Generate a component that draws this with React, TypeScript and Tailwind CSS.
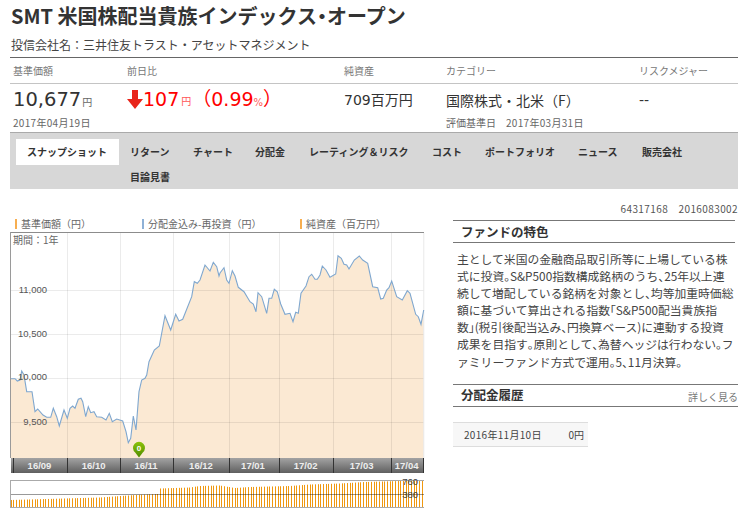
const pts: [number, number][] = [[11,378.7],[15,378.7],[17.3,381],[20,380],[21.7,371],[24,375],[26.7,391.7],[32,391.7],[35,411.7],[37.7,409],[43,415],[46.7,417.3],[50.7,417.3],[53.3,408.3],[56.7,416.7],[59.3,426],[64,410],[67.3,418.3],[70,408.3],[72.7,406],[75,408.3],[78.3,399.3],[81,398.3],[82.7,401.7],[85.7,416.7],[88.3,406.7],[90.7,412.7],[94,411.7],[96.7,416.7],[101.7,417.3],[106,420],[109.3,413.3],[112.3,421.7],[116.7,419],[122.7,421],[126,431.7],[128.3,442.7],[130.7,438.3],[133.3,416],[136,430],[139,391.7],[141.7,380],[145,378.3],[146.7,375],[149,361.7],[154.3,350],[159.3,346],[165,315.7],[170.7,330],[175.7,314.3],[179,321],[182.7,319.3],[191.7,296.7],[194.3,281.7],[197.3,283.3],[200,280],[205,265],[210,271],[213.3,262.3],[216.7,266.7],[219,276],[220,273],[224,267.7],[226.7,280],[229,283.3],[232.3,270.7],[235,276],[238.3,287.3],[244,291.7],[250,301.7],[253.3,304],[256,311.7],[258,292.7],[261.7,296.7],[266.7,313.3],[269,298.3],[271.7,298.3],[274.3,289.3],[277.3,291.7],[280.7,304],[285,314.3],[290,313.3],[293,321.7],[295.7,312.3],[298.3,313.3],[301,293.3],[306,286],[309,276.7],[311.7,274.3],[315,279.3],[317.3,279.3],[320,275],[322.3,266],[326,270],[330,277.3],[335.7,274],[338,255.7],[341.3,258.3],[344,264.3],[346.7,265],[349,269],[354.3,260],[359.3,256],[362.7,260],[367.7,263.3],[372.7,286.7],[377.7,287.7],[380.7,299],[383.3,298.3],[386.7,290],[389,287.7],[391.7,281],[396.7,296.7],[402.3,300],[407.3,290.7],[410,293.3],[415.7,314.3],[418.3,316.7],[421,324.3],[423.7,310]];
const line = pts.map((p) => p.join(",")).join(" ");
const area = `11,458 ${line} 423.7,458`;
const vx = [67.5, 120.5, 173.5, 229.5, 279.5, 333.5, 391.5];
const hy = [290.5, 334.5, 378.5, 422.5];
const ticks = [13.5, 67.5, 120.5, 173.5, 229.5, 279.5, 333.5, 391.5, 423.5];
const months: [string, number][] = [["16/09",39.5],["16/10",93.7],["16/11",146],["16/12",201],["17/01",253],["17/02",305.7],["17/03",361.7],["17/04",406.7]];
const yl: [string, number][] = [["11,000",289.5],["10,500",333],["10,000",376.5],["9,500",421.5]];
const vol: [number, number][] = [[11,500],[100,497.5],[135,495],[158,494],[160,488.5],[190,487.5],[200,486],[220,485.5],[235,488],[250,487],[290,486],[310,484.5],[340,483.5],[365,482],[400,481],[424,481]];
const volTop = (x: number) => {
  for (let i = 1; i < vol.length; i++) {
    if (x <= vol[i][0]) {
      const [a, b] = vol[i - 1];
      const [c, d] = vol[i];
      return b + ((d - b) * (x - a)) / (c - a);
    }
  }
  return 481;
};
const bars = Array.from({ length: 155 }, (_, i) => Math.floor(11 + i * 2.67) + 0.5);

const Chart = () => (
  <svg viewBox="10 232 415 278" width={415} height={278} className="block" style={{ fontFamily: '"Liberation Sans", sans-serif' }}>
    <defs>
      <linearGradient id="axis" x1="0" y1="0" x2="0" y2="1">
        <stop offset="0" stopColor="#a3a3a3" />
        <stop offset="1" stopColor="#5f5f5f" />
      </linearGradient>
      <linearGradient id="pin" x1="0" y1="0" x2="0" y2="1">
        <stop offset="0" stopColor="#8cc20a" />
        <stop offset="1" stopColor="#4f8c00" />
      </linearGradient>
    </defs>
    <polygon points={area} fill="#fbe9d3" />
    {vx.map((x) => <line key={x} x1={x} x2={x} y1={233} y2={458} stroke="#000" strokeOpacity="0.08" />)}
    {hy.map((y) => <line key={y} x1={11} x2={424} y1={y} y2={y} stroke="#000" strokeOpacity="0.08" />)}
    <line x1={423.8} x2={423.8} y1={233} y2={458} stroke="#e9e9e9" />
    <polyline points={line} fill="none" stroke="#7fa7cf" strokeWidth="1.1" />
    <line x1={10.5} x2={424} y1={232.5} y2={232.5} stroke="#8c8c8c" />
    <line x1={10.5} x2={10.5} y1={232} y2={458} stroke="#9a9a9a" />
    <text x={13} y={243.5} fontSize="10" fill="#666" style={{ fontFamily: '"Noto Sans CJK JP", sans-serif' }}>期間：1年</text>
    {yl.map(([t, y]) => <text key={t} x={47} y={y + 3.5} textAnchor="end" fontSize="9.5" fill="#555">{t}</text>)}
    <rect x={11} y={458} width={413} height={15} fill="url(#axis)" />
    {ticks.map((x) => <line key={x} x1={x} x2={x} y1={458} y2={473} stroke="#333" />)}
    {months.map(([t, x]) => <text key={t} x={x} y={469} textAnchor="middle" fontSize="9.5" fontWeight="700" fill="#eee">{t}</text>)}
    <path d="M139 457.5 L135.2 452.5 A6 6 0 1 1 142.8 452.5 Z" fill="url(#pin)" />
    <text x={139} y={451} textAnchor="middle" fontSize="8" fontWeight="700" fill="#fff">0</text>
    {bars.map((x) => <line key={x} x1={x} x2={x} y1={volTop(x)} y2={507} stroke="#f0980f" strokeWidth="1" />)}
    <line x1={11} x2={424} y1={480.5} y2={480.5} stroke="#aaa" />
    <line x1={11} x2={424} y1={494.5} y2={494.5} stroke="#000" strokeOpacity="0.4" />
    <line x1={11} x2={424} y1={507.5} y2={507.5} stroke="#aaa" />
    <line x1={10.5} x2={10.5} y1={480} y2={508} stroke="#aaa" />
    <text x={418} y={485} textAnchor="end" fontSize="9.5" fill="#444">760</text>
    <text x={418} y={498} textAnchor="end" fontSize="9.5" fill="#444">380</text>
  </svg>
);

const navRow1 = [
  ["リターン", "w-[63px]"],
  ["チャート", "w-[62px]"],
  ["分配金", "w-[54px]"],
  ["レーティング＆リスク", "w-[123px]"],
  ["コスト", "w-[53px]"],
  ["ポートフォリオ", "w-[93px]"],
  ["ニュース", "w-[64px]"],
  ["販売会社", "w-[60px]"],
];

const Legend = ({ color, label, w }: { color: string; label: string; w: string }) => (
  <div className={`flex items-center gap-[4px] ${w}`}>
    <span className={`w-[2px] h-[10px] ${color}`} />
    <span className="text-[10px] text-[#666] leading-none">{label}</span>
  </div>
);

const N = ({ c }: { c: string }) => <span className="tracking-[-6px]">{c}</span>;

const latin = { fontFamily: '"DejaVu Sans", "Noto Sans CJK JP", sans-serif' };

export default function App() {
  return (
    <div
      className="w-[751px] h-[512px] overflow-hidden bg-white text-[#333] pl-[10px]"
      style={{ fontFamily: '"Noto Sans CJK JP", sans-serif' }}
    >
      <h1 className="h-[33px] pl-[1px] pt-[2px] text-[20px] leading-[28px] font-bold whitespace-nowrap">
        SMT 米国株配当貴族インデックス<span className="ml-[-5px] tracking-[-5px]">・</span>オープン
      </h1>
      <p className="h-[24px] pl-[1px] text-[12px] leading-[24px] text-[#444] whitespace-nowrap">
        投信会社名：三井住友トラスト・アセットマネジメント
      </p>

      <div className="w-[728px] border-t border-[#666]">
        <div className="flex h-[26px] items-center border-b border-[#c4c4c4] text-[10px] text-[#777] pl-[3px]">
          <span className="w-[114px]">基準価額</span>
          <span className="w-[217px]">前日比</span>
          <span className="w-[102px]">純資産</span>
          <span className="w-[193px]">カテゴリー</span>
          <span>リスクメジャー</span>
        </div>
        <div className="flex h-[31px] items-center pl-[3px] whitespace-nowrap">
          <span className="w-[114px] text-[19.5px] leading-none pt-[1px]" style={latin}>
            10,677<span className="text-[10px] text-[#666] ml-[1px]">円</span>
          </span>
          <span className="w-[217px] flex items-center text-[#f00] text-[19px] leading-none" style={latin}>
            <svg width="16" height="19" viewBox="0 0 16 19" className="mr-[0px]"><path d="M5 0h6v9h5L8 19 0 9h5z" fill="#e8241a" /></svg>
            107<span className="text-[10px] text-[#f55] ml-[2px] mt-[5px]">円</span>
            <span className="ml-[1px]">（0.99<span className="text-[10px] text-[#f55]">%</span>）</span>
          </span>
          <span className="w-[102px] text-[14px] leading-none" style={latin}>709百万円</span>
          <span className="w-[193px] text-[14px] leading-none">国際株式・北米（F）</span>
          <span className="text-[14px] leading-none" style={latin}>--</span>
        </div>
        <div className="flex h-[16px] items-center pl-[3px] text-[10px] leading-none text-[#666]">
          <span className="w-[433px] tracking-[0.3px]">2017年04月19日</span>
          <span>評価基準日　<span className="tracking-[0.3px]">2017年03月31日</span></span>
        </div>
      </div>

      <nav className="w-[728px] h-[57px] mt-[1px] border-t border-[#aaa] bg-[#d7d7d7] pt-[6px] pl-[6px] text-[10px] font-bold text-[#333] whitespace-nowrap">
        <div className="flex h-[25px] items-center">
          <span className="flex w-[103px] h-[26px] items-center pl-[11px] bg-white mr-[11px]">スナップショット</span>
          {navRow1.map(([t, w]) => <span key={t} className={w}>{t}</span>)}
        </div>
        <div className="h-[26px] pl-[114px] leading-[25px]">目論見書</div>
      </nav>

      <div className="flex">
        <div className="w-[443px] pt-[29px]">
          <div className="flex h-[12px] items-center pl-[5px]">
            <Legend color="bg-[#f7ae50]" label="基準価額（円）" w="w-[127px]" />
            <Legend color="bg-[#8fb1d6]" label="分配金込み-再投資（円）" w="w-[158px]" />
            <Legend color="bg-[#f7ae50]" label="純資産（百万円）" w="w-[120px]" />
          </div>
          <div className="mt-[2px]"><Chart /></div>
        </div>

        <div className="w-[285px] whitespace-nowrap">
          <div className="h-[31px] pt-[14px] text-right text-[10px] leading-[12px] tracking-[0.4px] text-[#555]">64317168　2016083002</div>
          <div className="w-[282px] h-[23px] border-y border-[#777] pl-[8px] text-[12.5px] font-bold leading-[21px]">ファンドの特色</div>
          <p className="pl-[4px] pt-[7px] h-[141px] text-[11.8px] leading-[17.1px] text-[#444]">
            主として米国の金融商品取引所等に上場している株<br />
            式に投資<N c="。" />S&amp;P500指数構成銘柄のうち<N c="、" />25年以上連<br />
            続して増配している銘柄を対象とし<N c="、" />均等加重時価総<br />
            額に基づいて算出される指数<span className="ml-[-6px]">「</span>S&amp;P500配当貴族指<br />
            数<N c="」" />(税引後配当込み<N c="、" />円換算ベース)に連動する投資<br />
            成果を目指す<N c="。" />原則として<N c="、" />為替ヘッジは行わない<N c="。" />フ<br />
            ァミリーファンド方式で運用<N c="。" />5<N c="、" />11月決算<N c="。" />
          </p>
          <div className="flex h-[23px] items-center justify-between border-y border-[#777] pl-[8px]">
            <span className="text-[12.5px] font-bold">分配金履歴</span>
            <span className="text-[10px] text-[#777] mt-[1px]">詳しく見る</span>
          </div>
          <div className="flex w-[135px] h-[25px] mt-[15px] items-center justify-between border-y border-[#ddd] bg-[#f7f7f7] pl-[11px] pr-[4px] text-[10px] text-[#444]">
            <span className="tracking-[0.3px]">2016年11月10日</span>
            <span>0円</span>
          </div>
        </div>
      </div>
    </div>
  );
}
